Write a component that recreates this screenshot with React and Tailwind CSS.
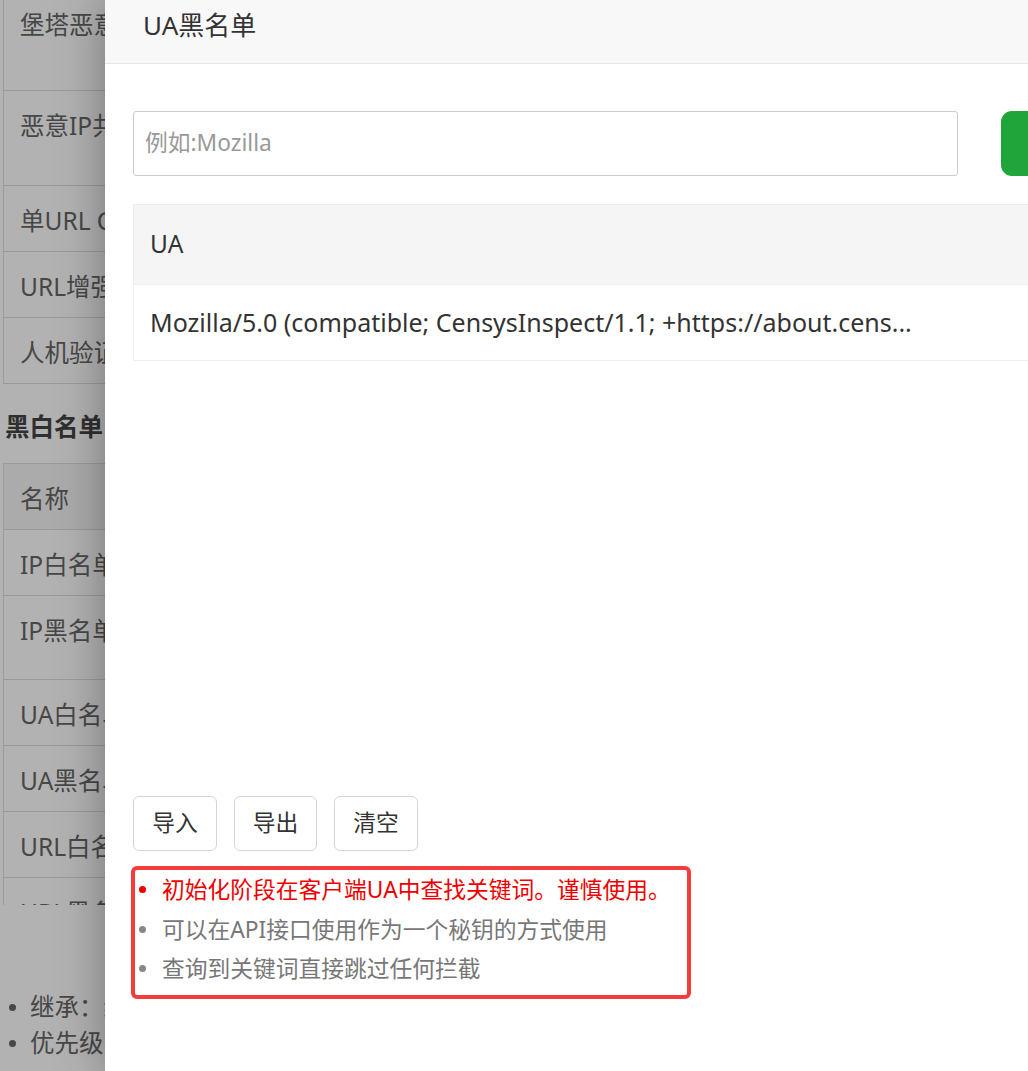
import React from "react";

const F = { fontFamily: '"Noto Sans", "Noto Sans CJK SC", sans-serif' };

function BgRow({ h, text, header }) {
  return (
    <div
      className={`flex border-b border-[#dddddd] pl-[16px] pt-[16px] ${header ? "bg-[#f5f5f5]" : ""}`}
      style={{ height: h }}
    >
      <span className="whitespace-nowrap text-[24.5px] leading-[37px] text-[#666]">{text}</span>
    </div>
  );
}

export default function App() {
  return (
    <div className="relative h-[1071px] w-[1028px] overflow-hidden bg-white" style={F}>
      {/* background page */}
      <div className="h-[905px] overflow-hidden">
        <div className="-mt-[10px] ml-[3px] w-[400px] border-l border-[#dddddd]">
          <BgRow h={101} text="堡塔恶意IP库" />
          <BgRow h={95} text="恶意IP共享计划" />
          <BgRow h={66} text="单URL CC防御" />
          <BgRow h={66} text="URL增强模式" />
          <BgRow h={66} text="人机验证" />
        </div>
        <div className="pl-[5px] pt-[24px] text-[24.5px] font-bold leading-[37px] text-[#444]">黑白名单</div>
        <div className="ml-[3px] mt-[18px] w-[400px] border-l border-t border-[#dddddd]">
          <BgRow h={66} text="名称" header />
          <BgRow h={66} text="IP白名单" />
          <BgRow h={84} text="IP黑名单" />
          <BgRow h={66} text="UA白名单" />
          <BgRow h={66} text="UA黑名单" />
          <BgRow h={66} text="URL白名单" />
          <BgRow h={66} text="URL黑名单" />
        </div>
      </div>
      <ul className="pl-[9px] pt-[84px]">
        <li className="flex items-center text-[24.5px] leading-[36px] text-[#666]">
          <span className="mr-[14px] h-[7px] w-[7px] rounded-full bg-[#666]" />
          继承：继承上级配置
        </li>
        <li className="flex items-center text-[24.5px] leading-[36px] text-[#666]">
          <span className="mr-[14px] h-[7px] w-[7px] rounded-full bg-[#666]" />
          优先级：白名单 &gt; 黑名单
        </li>
      </ul>

      {/* overlay */}
      <div className="absolute inset-0 bg-black/30" />

      {/* drawer */}
      <div className="absolute bottom-0 left-[105px] top-0 w-[1100px] bg-white shadow-[0_0_45px_rgba(0,0,0,0.35)]">
        <div className="h-[64px] border-b border-[#e6e6e6] bg-[#f8f8f8] pl-[38px]">
          <span className="text-[26px] leading-[50px] text-[#333]">UA黑名单</span>
        </div>
        <div className="px-[28px]">
          <div className="mt-[47px] flex items-center">
            <div className="flex h-[65px] w-[825px] shrink-0 items-center rounded-[3px] border border-[#cccccc] pl-[11px]">
              <span className="text-[22.75px] text-[#999]">例如:Mozilla</span>
            </div>
            <div className="ml-[43px] h-[65px] w-[200px] shrink-0 rounded-[11px] bg-[#20a53a]" />
          </div>
          <div className="mt-[28px] w-[1000px] border-l border-t border-[#eeeeee]">
            <div className="flex h-[80px] items-center border-b border-[#eeeeee] bg-[#f5f5f5] pl-[16px]">
              <span className="text-[24.5px] text-[#333]">UA</span>
            </div>
            <div className="flex h-[76px] items-center border-b border-[#eeeeee] pl-[16px]">
              <span className="whitespace-nowrap text-[25px] text-[#333]">
                Mozilla/5.0 (compatible; CensysInspect/1.1; +https://about.cens...
              </span>
            </div>
          </div>
          <div className="mt-[435px] flex gap-[17px]">
            <button className="h-[55px] w-[84px] rounded-[6px] border border-[#d5d5d5] text-[22.75px] text-[#333]">导入</button>
            <button className="h-[55px] w-[83px] rounded-[6px] border border-[#d5d5d5] text-[22.75px] text-[#333]">导出</button>
            <button className="h-[55px] w-[84px] rounded-[6px] border border-[#d5d5d5] text-[22.75px] text-[#333]">清空</button>
          </div>
          <div className="-ml-[2px] mt-[15px] h-[133px] w-[560px] rounded-[6px] border-4 border-[#f43c3c]">
            <ul>
              <li className="flex items-center text-[22.75px] leading-[39.5px] text-[#ee0000]">
                <span className="ml-[4px] mr-[16px] h-[7px] w-[7px] rounded-full bg-[#ee0000]" />
                初始化阶段在客户端UA中查找关键词。谨慎使用。
              </li>
              <li className="flex items-center text-[22.75px] leading-[39.5px] text-[#777]">
                <span className="ml-[4px] mr-[16px] h-[7px] w-[7px] rounded-full bg-[#888]" />
                可以在API接口使用作为一个秘钥的方式使用
              </li>
              <li className="flex items-center text-[22.75px] leading-[39.5px] text-[#777]">
                <span className="ml-[4px] mr-[16px] h-[7px] w-[7px] rounded-full bg-[#888]" />
                查询到关键词直接跳过任何拦截
              </li>
            </ul>
          </div>
        </div>
      </div>
    </div>
  );
}
